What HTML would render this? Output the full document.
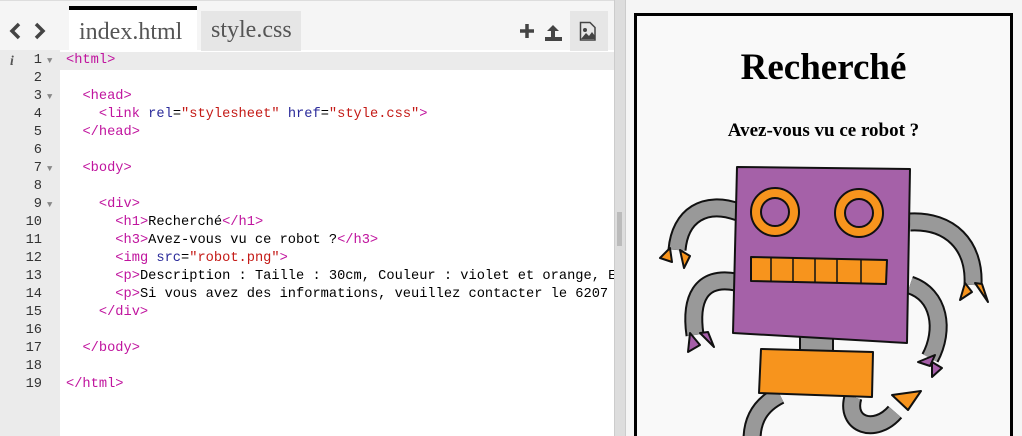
<!DOCTYPE html>
<html><head><meta charset="utf-8"><style>
*{margin:0;padding:0;box-sizing:border-box}
html{width:1022px;height:436px;overflow:hidden}
body{width:1022px;height:436px;overflow:hidden;background:#f5f5f5;font-family:"Liberation Sans",sans-serif;position:relative}
#left{position:absolute;left:0;top:0;width:614px;height:436px;background:#fff}
#top{position:absolute;left:0;top:0;width:614px;height:50px;background:#f5f5f5;border-top:1px solid #ddd}
.tab{position:absolute;top:10px;height:40px;font-family:"Liberation Serif",serif;font-size:24px;color:#555;padding:6px 10px 0}
#gut{position:absolute;left:0;top:50px;width:60px;height:386px;background:#ebebeb}
#code{position:absolute;left:0;top:52px;width:614px;height:384px;overflow:hidden;font-family:"Liberation Mono",monospace;font-size:13.7px}
.l{height:18px;line-height:18px;position:relative;white-space:pre}
.n{position:absolute;left:0;width:42px;text-align:right;color:#333}
.c{position:absolute;left:66px}
.t{color:#c0149e}.a{color:#2a2a9a}.s{color:#c41a16}
#div{position:absolute;left:614px;top:0;width:12px;height:436px;background:#ddd;border-left:1px solid #ccc;border-right:1px solid #ccc}
#right{position:absolute;left:626px;top:0;width:396px;height:436px;background:#f5f5f5;overflow:hidden}
#box{position:absolute;left:8px;top:13px;width:379px;height:440px;border:3px solid #000;background:#f9f9f9}
h1{position:absolute;left:0;width:100%;top:30px;text-align:center;font-family:"Liberation Serif",serif;font-size:37px;font-weight:bold}
h3{position:absolute;left:0;width:100%;top:104px;text-align:center;font-family:"Liberation Serif",serif;font-size:19px;font-weight:bold}
</style></head><body>
<div id="left">
<div id="top">
<svg style="position:absolute;left:8px;top:20px" width="40" height="20"><path d="M11 3 L4 10 L11 17" stroke="#444" stroke-width="3.5" fill="none"/><path d="M28 3 L35 10 L28 17" stroke="#444" stroke-width="3.5" fill="none"/></svg>
<div class="tab" style="left:69px;width:128px;background:#fff;border-top:4px solid #000;top:5px;height:45px;padding-top:9px">index.html</div>
<div class="tab" style="left:201px;width:100px;background:#e6e6e6">style.css</div>
<svg style="position:absolute;left:518px;top:20px" width="20" height="20"><path d="M9 3v14M2 10h14" stroke="#444" stroke-width="3.5"/></svg>
<svg style="position:absolute;left:544px;top:20px" width="22" height="22"><path d="M9 4 L3 10 H7 V16 H11 V10 H15 Z" fill="#444"/><rect x="1" y="16" width="17" height="4" fill="#444"/></svg>
<div style="position:absolute;left:570px;top:10px;width:38px;height:40px;background:#e6e6e6"></div>
<svg style="position:absolute;left:579px;top:20px" width="20" height="22"><path d="M1.5 1.5H11L16 6.5V19H1.5Z" fill="none" stroke="#444" stroke-width="1.5"/><circle cx="6" cy="9" r="2" fill="#444"/><path d="M2 18L7 12L10 15L13 11L16 15V18Z" fill="#444"/></svg>
</div>
<div id="gut"></div>
<div id="code">
<div class="l" style="background:#ebebeb"><span style="position:absolute;left:10px;color:#555;font-style:italic;font-family:'Liberation Serif',serif;font-weight:bold">i</span><span class="n">1</span><span style="position:absolute;left:47px;color:#888;font-size:9px">▼</span><span class="c"><span class="t">&lt;html&gt;</span></span></div>
<div class="l"><span class="n">2</span></div>
<div class="l"><span class="n">3</span><span style="position:absolute;left:47px;color:#888;font-size:9px">▼</span><span class="c">  <span class="t">&lt;head&gt;</span></span></div>
<div class="l"><span class="n">4</span><span class="c">    <span class="t">&lt;link</span> <span class="a">rel</span>=<span class="s">"stylesheet"</span> <span class="a">href</span>=<span class="s">"style.css"</span><span class="t">&gt;</span></span></div>
<div class="l"><span class="n">5</span><span class="c">  <span class="t">&lt;/head&gt;</span></span></div>
<div class="l"><span class="n">6</span></div>
<div class="l"><span class="n">7</span><span style="position:absolute;left:47px;color:#888;font-size:9px">▼</span><span class="c">  <span class="t">&lt;body&gt;</span></span></div>
<div class="l"><span class="n">8</span></div>
<div class="l"><span class="n">9</span><span style="position:absolute;left:47px;color:#888;font-size:9px">▼</span><span class="c">    <span class="t">&lt;div&gt;</span></span></div>
<div class="l"><span class="n">10</span><span class="c">      <span class="t">&lt;h1&gt;</span>Recherché<span class="t">&lt;/h1&gt;</span></span></div>
<div class="l"><span class="n">11</span><span class="c">      <span class="t">&lt;h3&gt;</span>Avez-vous vu ce robot ?<span class="t">&lt;/h3&gt;</span></span></div>
<div class="l"><span class="n">12</span><span class="c">      <span class="t">&lt;img</span> <span class="a">src</span>=<span class="s">"robot.png"</span><span class="t">&gt;</span></span></div>
<div class="l"><span class="n">13</span><span class="c">      <span class="t">&lt;p&gt;</span>Description : Taille : 30cm, Couleur : violet et orange, E</span></div>
<div class="l"><span class="n">14</span><span class="c">      <span class="t">&lt;p&gt;</span>Si vous avez des informations, veuillez contacter le 6207</span></div>
<div class="l"><span class="n">15</span><span class="c">    <span class="t">&lt;/div&gt;</span></span></div>
<div class="l"><span class="n">16</span></div>
<div class="l"><span class="n">17</span><span class="c">  <span class="t">&lt;/body&gt;</span></span></div>
<div class="l"><span class="n">18</span></div>
<div class="l"><span class="n">19</span><span class="c"><span class="t">&lt;/html&gt;</span></span></div>
</div>
</div>
<div id="div"><div style="position:absolute;left:2px;top:212px;width:5px;height:34px;background:#bbb"></div></div>
<div id="right"><div id="box"><h1>Recherché</h1><h3>Avez-vous vu ce robot ?</h3></div></div>
<svg style="position:absolute;left:0;top:0" width="1022" height="436">
<g stroke="#111" stroke-width="2" stroke-linejoin="round">
<g fill="none" stroke-linecap="butt">
<path d="M738 212 C705 200 680 215 677 250" stroke="#111" stroke-width="19"/>
<path d="M738 212 C705 200 680 215 677 250" stroke="#999" stroke-width="15"/>
<path d="M736 282 C700 275 690 300 695 335" stroke="#111" stroke-width="19"/>
<path d="M736 282 C700 275 690 300 695 335" stroke="#999" stroke-width="15"/>
<path d="M910 222 C950 220 975 245 973 285" stroke="#111" stroke-width="19"/>
<path d="M910 222 C950 220 975 245 973 285" stroke="#999" stroke-width="15"/>
<path d="M910 285 C940 295 945 330 930 358" stroke="#111" stroke-width="19"/>
<path d="M910 285 C940 295 945 330 930 358" stroke="#999" stroke-width="15"/>
<path d="M780 395 C760 405 752 420 752 440" stroke="#111" stroke-width="19"/>
<path d="M780 395 C760 405 752 420 752 440" stroke="#999" stroke-width="15"/>
<path d="M853 397 C845 425 875 435 895 412" stroke="#111" stroke-width="19"/>
<path d="M853 397 C845 425 875 435 895 412" stroke="#999" stroke-width="15"/>
</g>
<path d="M670 248 L660 258 L672 262 Z M680 250 L684 268 L690 256 Z" fill="#f7941d"/>
<path d="M690 333 L688 352 L700 345 Z M700 333 L714 347 L708 332 Z" fill="#a55ea8"/>
<path d="M965 283 L960 300 L972 292 Z M975 283 L988 302 L982 284 Z" fill="#f7941d"/>
<path d="M935 355 L918 362 L930 366 Z M932 362 L932 377 L942 368 Z" fill="#a55ea8"/>
<path d="M892 395 L921 391 L908 410 Z" fill="#f7941d"/>
<rect x="800" y="336" width="33" height="16" fill="#999"/>
<path d="M737 167 L910 169 L907 343 L733 333 Z" fill="#a561a8"/>
<circle cx="775" cy="212" r="24" fill="#f7941d"/><circle cx="775" cy="212" r="14" fill="#a561a8"/>
<circle cx="859" cy="213" r="24" fill="#f7941d"/><circle cx="859" cy="213" r="14" fill="#a561a8"/>
<path d="M751 257 L887 260 L886 284 L751 281 Z" fill="#f7941d"/>
<path d="M771 258V282M793 258V282M815 259V283M837 259V283M861 260V284" fill="none" stroke-width="1.5"/>
<path d="M761 349 L873 352 L872 397 L759 393 Z" fill="#f7941d"/>
</g>
</svg>
</body></html>
